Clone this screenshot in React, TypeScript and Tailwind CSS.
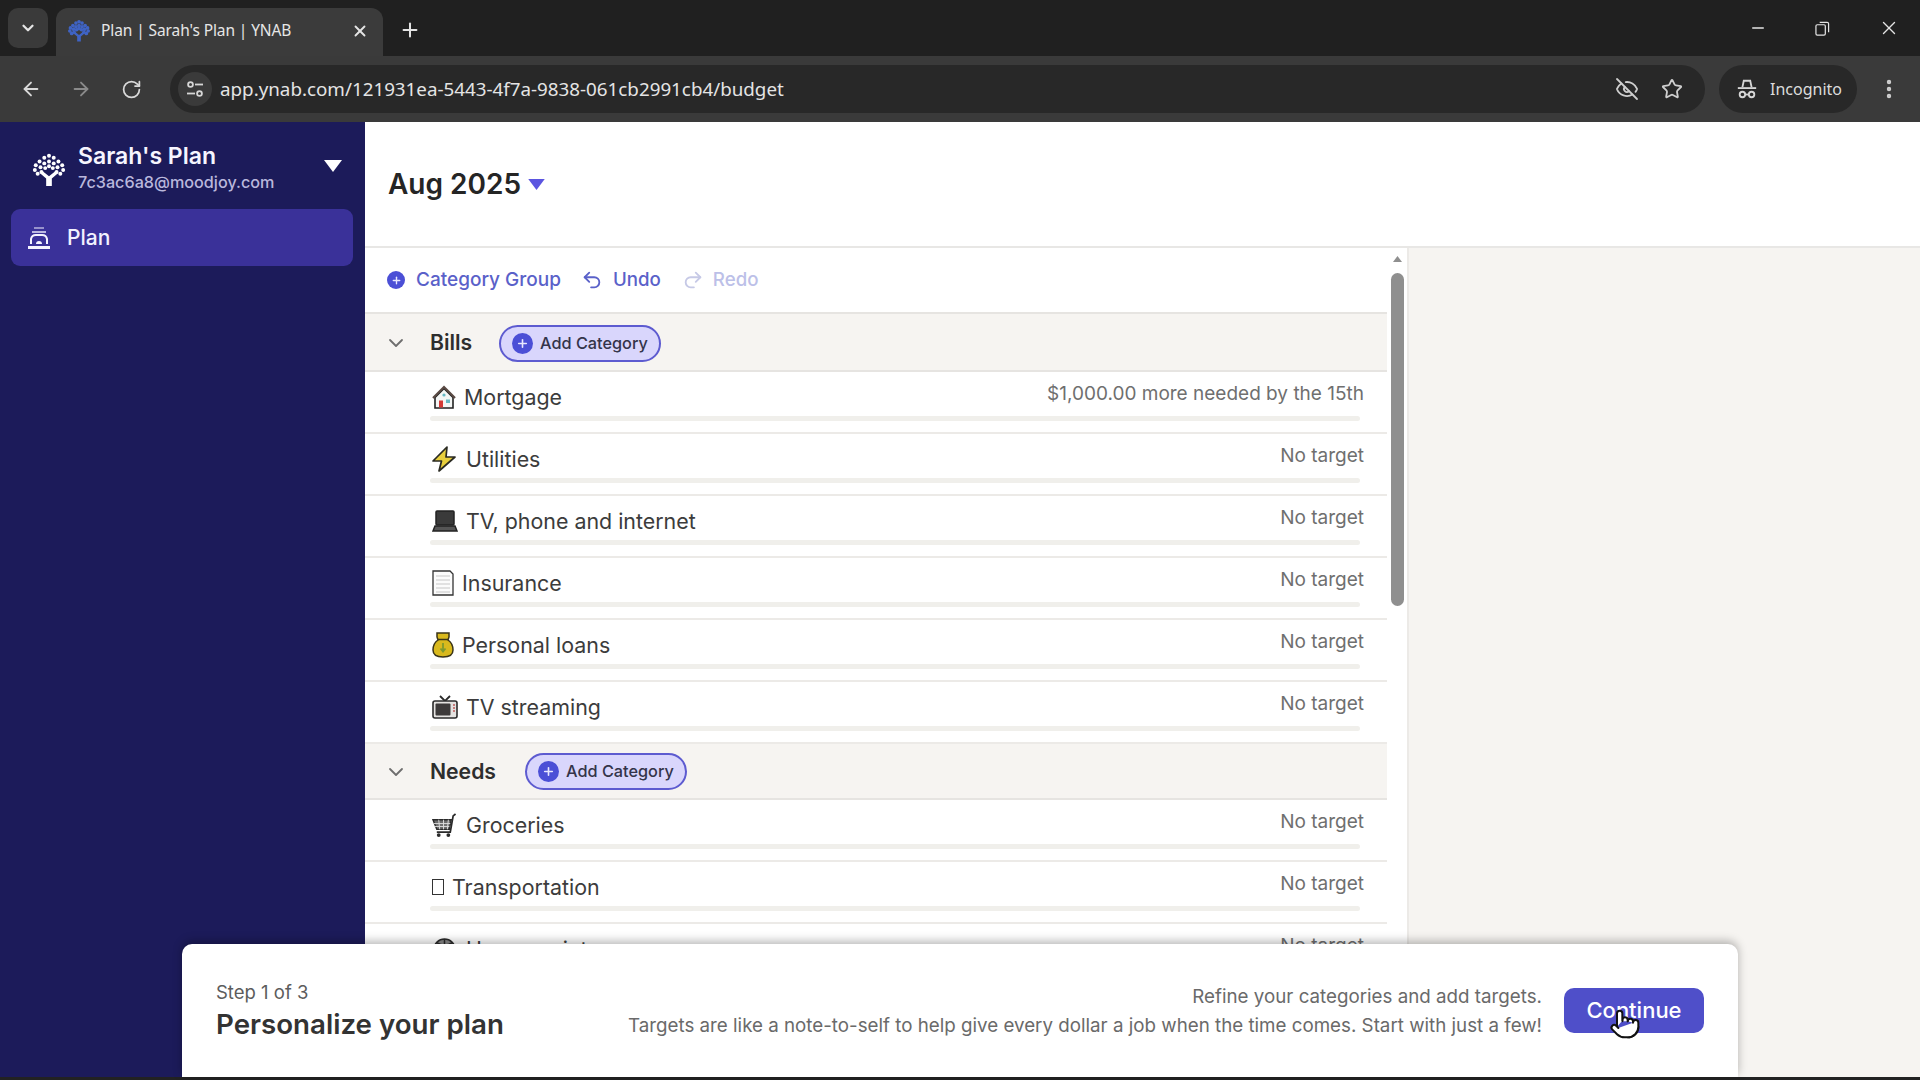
import {
  ArrowLeft,
  ArrowRight,
  ChevronDown,
  EyeOff,
  Minus,
  MoreVertical,
  Plus,
  Pointer,
  Redo2,
  RotateCw,
  Star,
  Undo2,
  X,
} from "lucide-react";
import type { ReactNode } from "react";

const chromeFont = "font-['Noto_Sans',sans-serif]";
const appFont = "font-['Inter',sans-serif]";

function TreeLogo({ className, color, dot = "2.1" }: { className: string; color: string; dot?: string }) {
  const dots = [
    [4, 13], [3, 18], [6, 22], [8, 9], [9, 15], [10, 20], [13, 5], [13, 11], [14, 16],
    [18, 3], [18, 9], [18, 14], [23, 5], [23, 11], [22, 16], [28, 9], [27, 15], [26, 20],
    [32, 13], [33, 18], [30, 22],
  ];
  return (
    <svg viewBox="0 0 36 36" className={className} fill={color}>
      {dots.map(([x, y]) => (
        <circle key={`${x}-${y}`} cx={x} cy={y} r={dot} />
      ))}
      <path d="M15 35V27L8.500 21.500l2.500-2.500 7 5.500 7-5.500 2.500 2.500L21 27v8z" />
    </svg>
  );
}

function PlanIcon() {
  return (
    <svg viewBox="0 0 26 26" className="h-[26px] w-[26px]" fill="none" stroke="#f4f3ff" strokeWidth="2">
      <path d="M8 3h10" strokeOpacity=".5" />
      <path d="M6 7h14" strokeOpacity=".7" />
      <path d="M5 19v-5a5 5 0 0 1 5-4h6a5 5 0 0 1 5 4v5" />
      <path d="M2 22.500h22" strokeWidth="3" />
      <path d="M10 19a3 3 0 0 1 6 0z" fill="#f4f3ff" stroke="none" />
    </svg>
  );
}

function Caret({ className, color }: { className: string; color: string }) {
  return (
    <svg viewBox="0 0 18 12" className={className}>
      <path d="M0 0h18L9 12z" fill={color} />
    </svg>
  );
}

function IncognitoIcon() {
  return (
    <svg viewBox="0 0 24 24" className="h-[22px] w-[22px]" fill="none" stroke="#d6d6d6" strokeWidth="2">
      <path d="M7 10l1.500-7h7L17 10" />
      <path d="M2 11h20" />
      <circle cx="7" cy="18" r="3" />
      <circle cx="17" cy="18" r="3" />
      <path d="M10 18h4" />
    </svg>
  );
}

function SiteInfoIcon() {
  return (
    <svg viewBox="0 0 20 20" className="h-[20px] w-[20px]" fill="none" stroke="#d6d6d6" strokeWidth="1.800">
      <circle cx="5.500" cy="5.500" r="2.400" />
      <path d="M10 5.500h8" />
      <path d="M2 14.500h8" />
      <circle cx="14.500" cy="14.500" r="2.400" />
    </svg>
  );
}

function RestoreIcon() {
  return (
    <svg viewBox="0 0 16 16" className="h-[15px] w-[15px]" fill="none" stroke="#e4e4e4" strokeWidth="1.300">
      <rect x="1" y="4" width="10" height="11" rx="1.400" />
      <path d="M5 1.500h8a1.500 1.500 0 0 1 1.500 1.500v9" />
    </svg>
  );
}

function HouseEmoji() {
  return (
    <svg viewBox="0 0 24 24" className="h-[25px] w-[24px]">
      <path d="M3 12v10.500h18V12L12 3z" fill="#f4f6f5" stroke="#222" strokeWidth="1.600" />
      <path d="M1 12.500L12 1.500l11 11" fill="none" stroke="#5a4a44" strokeWidth="2.200" />
      <rect x="7" y="15" width="4" height="7" fill="#d33a36" />
      <rect x="14" y="14" width="4" height="3.500" fill="#66b9c4" />
      <circle cx="12" cy="9.500" r="1.600" fill="#66b9c4" />
    </svg>
  );
}

function BoltEmoji() {
  return (
    <svg viewBox="0 0 24 26" className="h-[26px] w-[24px]">
      <path d="M15 1L1 15h8.500L7 25l16-14h-9z" fill="#e8cf3d" stroke="#2a2a22" strokeWidth="1.700" strokeLinejoin="round" />
    </svg>
  );
}

function LaptopEmoji() {
  return (
    <svg viewBox="0 0 26 24" className="h-[24px] w-[26px]">
      <rect x="4" y="2" width="18" height="14" rx="1" fill="#3a3a3a" stroke="#222" strokeWidth="1.500" />
      <path d="M3 17h20l2 5H1z" fill="#555" stroke="#222" strokeWidth="1.500" />
    </svg>
  );
}

function DocEmoji() {
  return (
    <svg viewBox="0 0 22 26" className="h-[26px] w-[22px]">
      <path d="M1 1h17l3 3v21H1z" fill="#fbfbfb" stroke="#333" strokeWidth="1.300" />
      <path d="M4 6h14M4 10h14M4 14h14M4 18h14M4 22h14" stroke="#c8c8c8" strokeWidth="1.200" />
    </svg>
  );
}

function MoneyBagEmoji() {
  return (
    <svg viewBox="0 0 22 26" className="h-[26px] w-[22px]">
      <path d="M5 1h12v4l-1 3c3 2 5 6 5 10 0 5-4 7-10 7S1 23 1 18c0-4 2-8 5-10L5 5z" fill="#d9b91d" stroke="#3a3418" strokeWidth="1.500" />
      <path d="M6 7.500h10" stroke="#3a3418" strokeWidth="1.500" />
      <path d="M11 11v8M8.500 16.500l2.500 3 2.500-3" fill="none" stroke="#7e9a2e" strokeWidth="1.800" />
    </svg>
  );
}

function TvEmoji() {
  return (
    <svg viewBox="0 0 26 24" className="h-[24px] w-[26px]">
      <path d="M8 1l5 5 5-5" fill="none" stroke="#2b2b2b" strokeWidth="1.800" />
      <rect x="1" y="6" width="24" height="17" rx="2" fill="#e4e2e0" stroke="#2b2b2b" strokeWidth="1.600" />
      <rect x="3.500" y="8.500" width="15" height="12" rx="1" fill="#3d3a3a" />
      <path d="M21 10h2M21 13h2M21 16h2" stroke="#c05a5a" strokeWidth="1.400" />
    </svg>
  );
}

function CartEmoji() {
  return (
    <svg viewBox="0 0 26 26" className="h-[25px] w-[25px]">
      <path d="M1 7h19l-2 10H5z" fill="#6b6b6b" stroke="#2a2a2a" strokeWidth="1.500" />
      <path d="M2 11h17M3 14h15M7 7l1 10M12 7v10M17 7l-1 10" stroke="#ddd" strokeWidth="1" />
      <path d="M5 20h14l3-17 2.500-2" fill="none" stroke="#2a2a2a" strokeWidth="1.800" />
      <circle cx="7" cy="23" r="2" fill="#2a2a2a" />
      <circle cx="17" cy="23" r="2" fill="#2a2a2a" />
    </svg>
  );
}

function TofuGlyph() {
  return <span className="block h-[16px] w-[12px] border border-[#333]" />;
}

function GlobeEmoji() {
  return (
    <svg viewBox="0 0 26 26" className="h-[25px] w-[25px]" fill="none" stroke="#2b2b2b" strokeWidth="1.600">
      <circle cx="13" cy="13" r="11" fill="#8a8a8a" />
      <path d="M13 2v22M2 13h22M5 6c5 3 11 3 16 0M5 20c5-3 11-3 16 0" />
    </svg>
  );
}

function CirclePlus({ className, plus }: { className: string; plus: string }) {
  return (
    <span className={`flex items-center justify-center rounded-full bg-[#4b4fd6] ${className}`}>
      <Plus className={plus} color="#e9e8ff" strokeWidth={3} />
    </span>
  );
}

type Row = { icon: ReactNode; label: string; box: string; note?: string };

function CategoryRow({ icon, label, box, note = "No target" }: Row) {
  return (
    <div className="h-[62px] shrink-0 border-b-2 border-[#eceae7] bg-white pl-[65px] pr-[23px] pt-[9px]">
      <div className="flex h-[32px] items-start justify-between">
        <div className="flex h-[32px] items-center">
          <span className={`flex items-center pl-[2px] ${box}`}>{icon}</span>
          <span className="text-[21.400px] text-[#3c3c3c]">{label}</span>
        </div>
        <span className="text-[19px] leading-[26px] text-[#6f6f6f]">{note}</span>
      </div>
      <div className="mr-[4px] mt-[3px] h-[5px] rounded-full bg-[#f0efeb]" />
    </div>
  );
}

function GroupRow({ name, nameBox, size }: { name: string; nameBox: string; size: string }) {
  return (
    <div className={`flex shrink-0 items-center border-b-2 border-[#e6e4e1] bg-[#f6f4f1] ${size}`}>
      <span className="flex w-[65px] justify-center pr-[3px]">
        <ChevronDown className="h-[24px] w-[24px]" color="#6e6e6e" strokeWidth={1.800} />
      </span>
      <span className={`text-[21.200px] font-semibold text-[#2e2e2e] ${nameBox}`}>{name}</span>
      <button className="flex h-[37px] w-[162px] items-center gap-[7px] rounded-full border-2 border-[#5d5bd0] bg-[#d9d6fc] pl-[11px]">
        <CirclePlus className="h-[21px] w-[21px]" plus="h-[13px] w-[13px]" />
        <span className="text-[16.300px] font-medium text-[#34344a]">Add Category</span>
      </button>
    </div>
  );
}

export default function App() {
  return (
    <div className={`flex h-screen w-[1920px] flex-col overflow-hidden bg-[#222222] ${appFont}`}>
      {/* browser tabs */}
      <div className={`flex h-[56px] shrink-0 items-end bg-[#202020] pl-[8px] ${chromeFont}`}>
        <div className="mb-[8px] flex h-[40px] w-[40px] items-center justify-center rounded-[10px] bg-[#3a3a3a]">
          <ChevronDown className="h-[18px] w-[18px]" color="#e4e4e4" strokeWidth={3} />
        </div>
        <div className="ml-[8px] flex h-[48px] w-[327px] items-center rounded-t-[12px] bg-[#3b3b3b] pb-[2px] pl-[12px] pr-[14px]">
          <TreeLogo className="h-[22px] w-[22px]" color="#3f63c4" dot="3" />
          <span className="ml-[11px] flex-1 text-[15.500px] tracking-[-0.1px] text-[#e6e6e6]">Plan | Sarah's Plan | YNAB</span>
          <X className="h-[18px] w-[18px]" color="#e4e4e4" strokeWidth={2.500} />
        </div>
        <Plus className="mb-[15px] ml-[16px] h-[22px] w-[22px]" color="#e4e4e4" strokeWidth={2.200} />
        <div className="mb-[6px] ml-auto flex h-[44px] items-center gap-[48px] pr-[20px]">
          <Minus className="h-[18px] w-[18px]" color="#e4e4e4" strokeWidth={2} />
          <RestoreIcon />
          <X className="h-[22px] w-[22px]" color="#e4e4e4" strokeWidth={1.500} />
        </div>
      </div>

      {/* browser toolbar */}
      <div className={`flex h-[66px] shrink-0 items-center bg-[#3a3a3a] pl-[20px] ${chromeFont}`}>
        <ArrowLeft className="h-[22px] w-[22px]" color="#d9d9d9" strokeWidth={2} />
        <ArrowRight className="ml-[28px] h-[22px] w-[22px]" color="#8a8a8a" strokeWidth={2} />
        <RotateCw className="ml-[29px] h-[21px] w-[21px]" color="#d9d9d9" strokeWidth={2} />
        <div className="ml-[28px] flex h-[48px] w-[1535px] items-center rounded-full bg-[#282828] pl-[8px] pr-[22px]">
          <span className="flex h-[34px] w-[34px] items-center justify-center rounded-full bg-[#3a3a3a]">
            <SiteInfoIcon />
          </span>
          <span className="ml-[8px] flex-1 text-[18.800px] text-[#e4e4e4]">app.ynab.com/121931ea-5443-4f7a-9838-061cb2991cb4/budget</span>
          <EyeOff className="h-[24px] w-[24px]" color="#cfcfcf" strokeWidth={1.800} />
          <Star className="ml-[22px] h-[22px] w-[22px]" color="#cfcfcf" strokeWidth={2} />
        </div>
        <div className="ml-[14px] flex h-[48px] w-[138px] items-center rounded-full bg-[#282828] pl-[17px]">
          <IncognitoIcon />
          <span className="ml-[12px] text-[16px] text-[#dcdcdc]">Incognito</span>
        </div>
        <MoreVertical className="ml-[20px] h-[24px] w-[24px]" color="#cfcfcf" strokeWidth={2.400} />
      </div>

      {/* app */}
      <div className="relative flex min-h-0 flex-1">
        <aside className="flex w-[365px] shrink-0 flex-col bg-[#1c1b5a] pl-[11px] pr-[12px]">
          <div className="flex h-[87px] items-center">
            <span className="ml-[21px] mt-[8px]">
              <TreeLogo className="h-[36px] w-[34px]" color="#ffffff" />
            </span>
            <div className="ml-[12px] mt-[2px] flex-1">
              <p className="text-[23px] font-semibold leading-[30px] text-[#f6f5ff]">Sarah's Plan</p>
              <p className="text-[16.200px] font-medium leading-[22px] text-[#b9b7dc]">7c3ac6a8@moodjoy.com</p>
            </div>
            <Caret className="mr-[11px] mt-[1px] h-[12px] w-[18px]" color="#ffffff" />
          </div>
          <div className="flex h-[57px] items-center rounded-[9px] bg-[#3a3199] pl-[15px]">
            <PlanIcon />
            <span className="ml-[15px] text-[21px] font-medium text-[#f2f1ff]">Plan</span>
          </div>
        </aside>

        <main className="flex min-w-0 flex-1 flex-col">
          <div className="flex h-[126px] shrink-0 items-center border-b-2 border-[#e8e7e5] bg-white pl-[23px]">
            <h1 className="text-[28px] font-semibold text-[#252525]">Aug 2025</h1>
            <Caret className="ml-[7px] mt-[1px] h-[11px] w-[17px]" color="#5b55e0" />
          </div>
          <div className="flex min-h-0 flex-1">
            <div className="flex w-[1044px] shrink-0 border-r-2 border-[#eceae7] bg-white">
              <div className="flex w-[1022px] flex-col overflow-hidden">
                <div className="flex h-[66px] shrink-0 items-center border-b-2 border-[#e6e4e1] pl-[22px] text-[19px] font-medium">
                  <CirclePlus className="h-[18px] w-[18px]" plus="h-[11px] w-[11px]" />
                  <span className="ml-[11px] text-[#5a61c9]">Category Group</span>
                  <Undo2 className="ml-[20px] h-[22px] w-[22px]" color="#5a61c9" strokeWidth={2} />
                  <span className="ml-[10px] text-[18.700px] text-[#5a61c9]">Undo</span>
                  <Redo2 className="ml-[21px] h-[22px] w-[22px]" color="#c6c9e6" strokeWidth={2} />
                  <span className="ml-[9px] text-[18.700px] text-[#bcc0e8]">Redo</span>
                </div>
                <GroupRow name="Bills" nameBox="w-[69px]" size="h-[58px] pt-[2px]" />
                <CategoryRow icon={<HouseEmoji />} box="w-[34px]" label="Mortgage" note="$1,000.00 more needed by the 15th" />
                <CategoryRow icon={<BoltEmoji />} box="w-[36px]" label="Utilities" />
                <CategoryRow icon={<LaptopEmoji />} box="w-[36px]" label="TV, phone and internet" />
                <CategoryRow icon={<DocEmoji />} box="w-[32px]" label="Insurance" />
                <CategoryRow icon={<MoneyBagEmoji />} box="w-[32px]" label="Personal loans" />
                <CategoryRow icon={<TvEmoji />} box="w-[36px]" label="TV streaming" />
                <GroupRow name="Needs" nameBox="w-[95px]" size="h-[56px] pt-[1px]" />
                <CategoryRow icon={<CartEmoji />} box="w-[36px]" label="Groceries" />
                <CategoryRow icon={<TofuGlyph />} box="w-[22px]" label="Transportation" />
                <CategoryRow icon={<GlobeEmoji />} box="w-[36px]" label="Home maintenance" />
              </div>
              <div className="flex w-[20px] flex-col items-center pt-[8px]">
                <Caret className="h-[6px] w-[11px] rotate-180" color="#8f8f8f" />
                <div className="mt-[11px] h-[333px] w-[13px] rounded-full bg-[#8f8f8f]" />
              </div>
            </div>
            <div className="flex-1 bg-[#f6f4f1]" />
          </div>
        </main>

        {/* onboarding card over the plan */}
        <div className="absolute bottom-0 left-[182px] top-[822px] flex w-[1556px] items-center rounded-t-[10px] bg-white pl-[34px] pr-[34px] shadow-[0_-3px_10px_rgba(0,0,0,0.28)]">
          <div className="flex-1">
            <p className="text-[18.500px] leading-[26px] text-[#5c5c5c]">Step 1 of 3</p>
            <p className="text-[27.700px] font-semibold leading-[38px] text-[#333333]">Personalize your plan</p>
          </div>
          <div className="mr-[22px] text-right text-[18.750px] leading-[29px] text-[#6a6a6a]">
            <p>Refine your categories and add targets.</p>
            <p>Targets are like a note-to-self to help give every dollar a job when the time comes. Start with just a few!</p>
          </div>
          <button className="h-[45px] w-[140px] rounded-[10px] bg-[#4f4fc9] text-[22px] font-medium text-white">Continue</button>
          <Pointer className="absolute left-[1427px] top-[64px] h-[32px] w-[32px]" color="#111111" fill="#ffffff" strokeWidth={1.500} />
        </div>
      </div>

      {/* bottom edge of the capture */}
      <div className="h-[3px] shrink-0 bg-[#222222]" />
    </div>
  );
}
